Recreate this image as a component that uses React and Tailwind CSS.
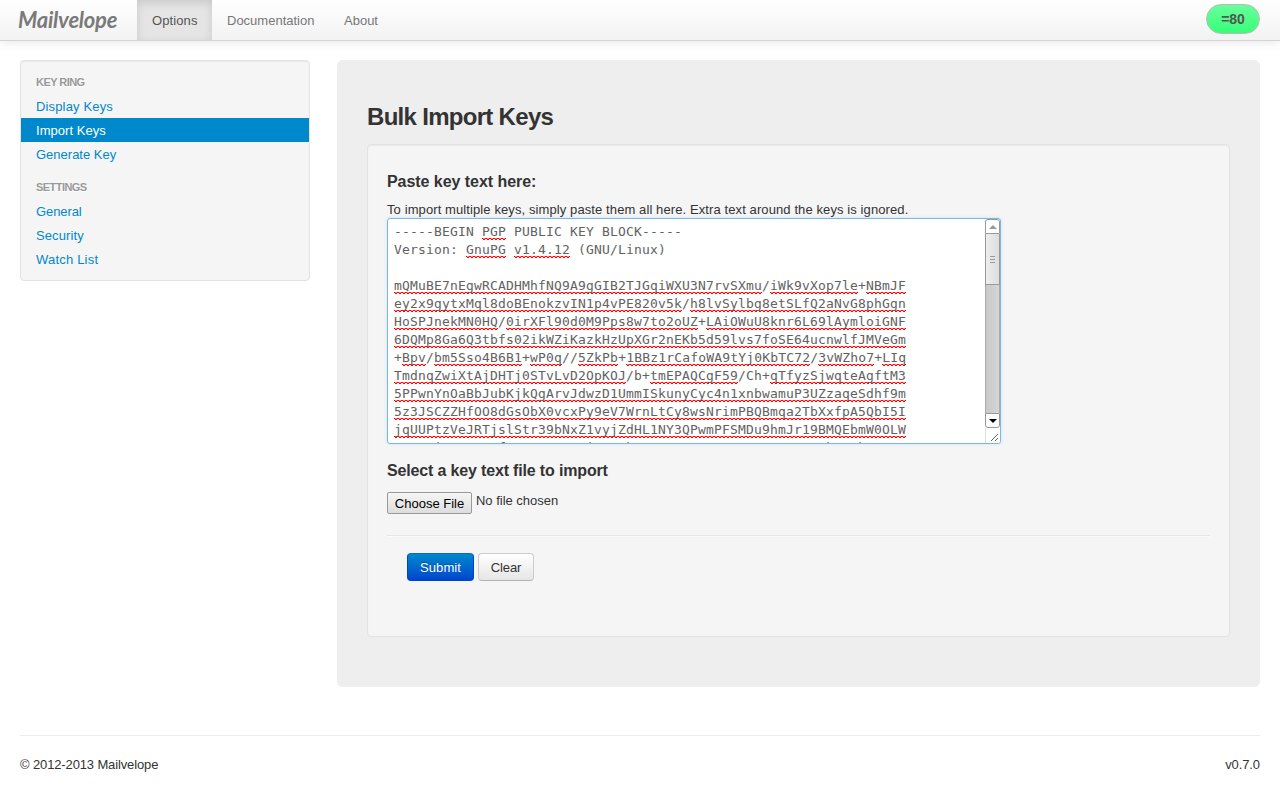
const squiggle =
  "inline-block h-[18px] align-top bg-[linear-gradient(90deg,transparent_0_1px,#f00_1px_3px,transparent_3px),linear-gradient(90deg,#f00_0_1px,#f88_1px_3px,#f00_3px)] bg-[length:4px_1px] bg-repeat-x bg-[position:0_16px,0_15px]";

const keyLines = [
  "-----BEGIN [PGP] PUBLIC KEY BLOCK-----",
  "Version: [GnuPG] [v1.4.12] (GNU/Linux)",
  "",
  "[mQMuBE7nEgwRCADHMhfNQ9A9gGIB2TJGqiWXU3N7rvSXmu]/[iWk9vXop7le]+[NBmJF]",
  "[ey2x9gytxMql8doBEnokzvIN1p4vPE820v5k]/[h8lvSylbg8etSLfQ2aNvG8phGgn]",
  "[HoSPJnekMN0HQ]/[0irXFl90d0M9Pps8w7to2oUZ]+[LAiOWuU8knr6L69lAymloiGNF]",
  "[6DQMp8Ga6Q3tbfs02ikWZiKazkHzUpXGr2nEKb5d59lvs7foSE64ucnwlfJMVeGm]",
  "+[Bpv]/[bm5Sso4B6B1]+[wP0q]//[5ZkPb]+[1BBz1rCafoWA9tYj0KbTC72]/[3vWZho7]+[LIq]",
  "[TmdnqZwiXtAjDHTj0STvLvD2OpKOJ]/b+[tmEPAQCgF59]/Ch+[qTfyzSjwqteAgftM3]",
  "[5PPwnYnOaBbJubKjkQgArvJdwzD1UmmISkunyCyc4n1xnbwamuP3UZzaqeSdhf9m]",
  "[5z3JSCZZHfOO8dGsObX0vcxPy9eV7WrnLtCy8wsNrimPBQBmqa2TbXxfpA5QbI5I]",
  "[jqUUPtzVeJRTjslStr39bNxZ1vyjZdHL1NY3QPwmPFSMDu9hmJr19BMQEbmW0OLW]",
  "xxxxxixxxxxxxfxxxxxxxxxxixxxxkxxxxxxxxxxxxxxxxxxxxxxxxkxxxkxxxxx",
];

function KeyLine({ text }) {
  return (
    <div className="h-[18px] whitespace-pre">
      {text.split(/(\[[^\]]+\])/).map((part, i) =>
        part.startsWith("[") ? (
          <span key={i} className={squiggle}>{part.slice(1, -1)}</span>
        ) : (
          part
        )
      )}
    </div>
  );
}

function NavHeader({ children }) {
  return (
    <div className="h-[24px] px-[15px] pt-[3px] text-[11px] leading-[18px] font-bold tracking-[-0.55px] text-[#999] [text-shadow:0_1px_0_#fff]">
      {children}
    </div>
  );
}

function NavItem({ active, children, spacing }) {
  return (
    <a className={`block h-6 px-[15px] pt-px leading-[24px] ${spacing} ${active ? "bg-[#0088cc] text-white" : "text-[#0088cc]"}`}>
      {children}
    </a>
  );
}

function Scrollbar() {
  return (
    <div className="flex w-[15px] shrink-0 flex-col">
      <div className="flex h-[15px] items-center justify-center rounded-t-[3px] border border-[#999] bg-white">
        <svg width="8" height="4" viewBox="0 0 8 4"><path d="M4 0L8 4H0Z" fill="#999" /></svg>
      </div>
      <div className="flex h-[51px] flex-col items-center justify-center gap-[2px] border-x border-b border-[#999] bg-linear-to-r from-[#eee] to-[#ddd]">
        <i className="block h-px w-[5px] bg-[#999]" />
        <i className="block h-px w-[5px] bg-[#999]" />
        <i className="block h-px w-[5px] bg-[#999]" />
      </div>
      <div className="flex-1 border-x border-[#aaa] bg-linear-to-r from-[#c8c8c8] to-[#d6d6d6]" />
      <div className="flex h-[15px] items-center justify-center rounded-b-[3px] border border-[#999] bg-white">
        <svg width="8" height="4" viewBox="0 0 8 4"><path d="M0 0H8L4 4Z" fill="#000" /></svg>
      </div>
      <div className="flex h-[15px] items-end justify-end border-l border-[#ddd] bg-white p-px">
        <svg width="9" height="9" viewBox="0 0 9 9" stroke="#666" strokeWidth="1"><path d="M1 8L8 1M5 8L8 5" /></svg>
      </div>
    </div>
  );
}

export default function App() {
  return (
    <div className="flex h-[792px] w-[1280px] flex-col overflow-hidden bg-white font-['Liberation_Sans',Arial,sans-serif] text-[13px] leading-[18px] text-[#333]">
      <header className="flex h-[41px] shrink-0 border-b border-[#d4d4d4] bg-linear-to-b from-white to-[#f2f2f2] pr-5 pl-[18px] shadow-[0_1px_10px_rgba(0,0,0,0.1)]">
        <div className="w-[119px] pt-[4px] font-[Lato,sans-serif] text-[22px] leading-[32px] font-bold tracking-[-0.25px] text-[#7a7a7a] italic">Mailvelope</div>
        <nav className="flex leading-[42px] text-[#777]">
          <a className="h-10 w-[75px] bg-[#e5e5e5] pl-[15px] tracking-[0.1px] text-[#555] shadow-[inset_0_3px_8px_rgba(0,0,0,0.125)]">Options</a>
          <a className="h-10 w-[117px] pl-[15px] tracking-[0px]">Documentation</a>
          <a className="h-10 pl-[15px]">About</a>
        </nav>
        <div className="mt-1 ml-auto flex h-[30px] w-[54px] items-center justify-center rounded-full border border-[#bbb] bg-linear-to-b from-[#66ff99] to-[#33ff77] text-[14px] font-bold text-[#555]">=80</div>
      </header>

      <div className="flex gap-[27px] px-5 pt-[19px]">
        <aside className="h-[221px] w-[290px] shrink-0 rounded-[4px] border border-[#e3e3e3] bg-[#f5f5f5] pt-[9px] shadow-[inset_0_1px_1px_rgba(0,0,0,0.05)]">
          <NavHeader>KEY RING</NavHeader>
          <NavItem spacing="tracking-[0.15px]">Display Keys</NavItem>
          <NavItem spacing="tracking-[0.05px]" active>Import Keys</NavItem>
          <NavItem spacing="tracking-[0px]">Generate Key</NavItem>
          <div className="h-[9px]" />
          <NavHeader>SETTINGS</NavHeader>
          <NavItem spacing="tracking-[-0.1px]">General</NavItem>
          <NavItem spacing="tracking-[0.1px]">Security</NavItem>
          <NavItem spacing="tracking-[0.2px]">Watch List</NavItem>
        </aside>

        <main className="h-[627px] w-[923px] rounded-[6px] bg-[#eee] px-[30px] pt-[39px]">
          <h1 className="h-[45px] text-[24px] leading-[36px] font-bold tracking-[-0.7px]">Bulk Import Keys</h1>
          <section className="h-[493px] rounded-[4px] border border-[#e3e3e3] bg-[#f5f5f5] px-[19px] pt-[23px] shadow-[inset_0_1px_1px_rgba(0,0,0,0.05)]">
            <h2 className="text-[16px] leading-[27px] font-bold tracking-[-0.05px]">Paste key text here:</h2>
            <p className="mt-[6px] h-[17px] tracking-[0.1px] whitespace-nowrap">To import multiple keys, simply paste them all here. Extra text around the keys is ignored.</p>
            <div className="flex h-[226px] w-[614px] overflow-hidden rounded-[3px] border border-[#7cb8e6] bg-white shadow-[0_0_3px_rgba(82,168,236,0.3)]">
              <div className="h-full flex-1 overflow-hidden pt-[4px] pl-[6px] font-['DejaVu_Sans_Mono',monospace] text-[13px] leading-[18px] tracking-[0.174px] text-[#626262]">
                {keyLines.map((line, i) => <KeyLine key={i} text={line} />)}
              </div>
              <Scrollbar />
            </div>
            <h2 className="mt-[13px] text-[16px] leading-[27px] font-bold tracking-[-0.16px]">Select a key text file to import</h2>
            <div className="mt-2 flex gap-1">
              <button className="h-[22px] w-[85px] rounded-[2px] border border-[#999] bg-linear-to-b from-[#f6f6f6] to-[#ddd] pt-px text-[13px] leading-5 whitespace-nowrap text-black">Choose File</button>
              <span className="tracking-[-0.02px]">No file chosen</span>
            </div>
            <div className="mt-[21px] h-[2px] border-t border-b border-t-[#e5e5e5] border-b-[#fafafa]" />
            <div className="mt-[16px] ml-5 flex gap-1">
              <button className="h-[28px] w-[67px] rounded-[4px] border border-[#0044cc] border-t-[#0a6cc0] bg-linear-to-b from-[#0088cc] to-[#0044cc] pt-[2px] tracking-[0.1px] text-white [text-shadow:0_-1px_0_rgba(0,0,0,0.25)]">Submit</button>
              <button className="h-[28px] w-[56px] rounded-[4px] border border-[#ccc] border-b-[#b3b3b3] bg-linear-to-b from-white to-[#e6e6e6] pt-[2px] tracking-[-0.1px] text-[#333]">Clear</button>
            </div>
          </section>
        </main>
      </div>

      <footer className="mx-5 mt-[48px] flex justify-between border-t border-[#eee] pt-[20px]">
        <span className="tracking-[-0.13px]">© 2012-2013 Mailvelope</span>
        <span className="tracking-[-0.1px]">v0.7.0</span>
      </footer>
    </div>
  );
}
